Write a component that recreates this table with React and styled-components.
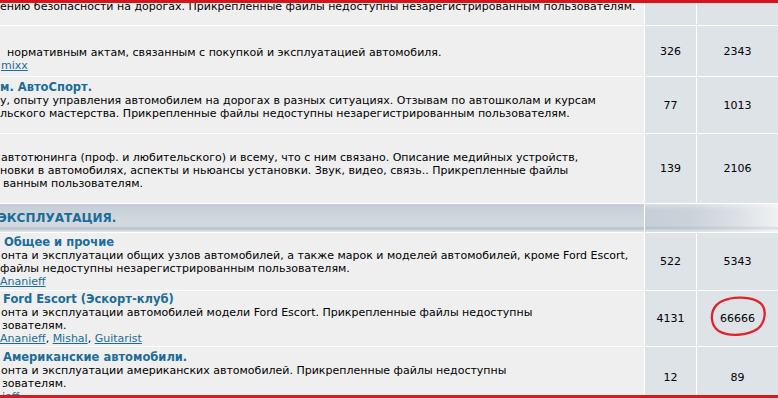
import React from 'react';
import styled, { createGlobalStyle } from 'styled-components';

const GlobalStyle = createGlobalStyle`
  html, body {
    margin: 0;
    padding: 0;
    background: #fff;
    overflow: hidden;
  }
  body {
    font-family: "DejaVu Sans", Verdana, sans-serif;
  }
`;

const forums = [
  {
    top: 0,
    lines: [
      { x: 0, text: 'ению безопасности на дорогах. Прикрепленные файлы недоступны незарегистрированным пользователям.' },
    ],
  },
  {
    top: 7,
    title: { x: 0, text: '' },
    lines: [{ x: 7, text: 'нормативным актам, связанным с покупкой и эксплуатацией автомобиля.' }],
    mods: { x: 1, names: ['mixx'] },
    topics: 326,
    posts: 2343,
  },
  {
    top: 4,
    title: { x: 0, text: 'м. АвтоСпорт.' },
    lines: [
      { x: 0, text: 'у, опыту управления автомобилем на дорогах в разных ситуациях. Отзывам по автошколам и курсам' },
      { x: 0, text: 'льского мастерства. Прикрепленные файлы недоступны незарегистрированным пользователям.' },
    ],
    topics: 77,
    posts: 1013,
  },
  {
    top: 4,
    title: { x: 0, text: '' },
    lines: [
      { x: 1, text: 'автотюнинга (проф. и любительского) и всему, что с ним связано. Описание медийных устройств,' },
      { x: 0, text: 'новки в автомобилях, аспекты и ньюансы установки. Звук, видео, связь.. Прикрепленные файлы' },
      { x: 3, text: 'ванным пользователям.' },
    ],
    topics: 139,
    posts: 2106,
  },
  'cat',
  {
    top: 3,
    title: { x: 4, text: 'Общее и прочие' },
    lines: [
      { x: 1, text: 'онта и эксплуатации общих узлов автомобилей, а также марок и моделей автомобилей, кроме Ford Escort,' },
      { x: 0, text: 'файлы недоступны незарегистрированным пользователям.' },
    ],
    mods: { x: 0, names: ['Ananieff'] },
    topics: 522,
    posts: 5343,
  },
  {
    top: 2,
    title: { x: 3, text: 'Ford Escort (Эскорт-клуб)' },
    lines: [
      { x: 1, text: 'онта и эксплуатации автомобилей модели Ford Escort. Прикрепленные файлы недоступны' },
      { x: 2, text: 'зователям.' },
    ],
    mods: { x: 0, names: ['Ananieff', 'Mishal', 'Guitarist'] },
    topics: 4131,
    posts: 66666,
  },
  {
    top: 4,
    title: { x: 3, text: 'Американские автомобили.' },
    lines: [
      { x: 1, text: 'онта и эксплуатации американских автомобилей. Прикрепленные файлы недоступны' },
      { x: 2, text: 'зователям.' },
    ],
    mods: { x: 2, names: ['ieff'] },
    topics: 12,
    posts: 89,
  },
];

function App() {
  return (
    <>
      <GlobalStyle />
      <Frame>
        <Table>
          {forums.map((f, i) =>
            f === 'cat' ? (
              <React.Fragment key={i}>
                <CatLeft>
                  <CatTitle>ЭКСПЛУАТАЦИЯ.</CatTitle>
                </CatLeft>
                <CatRight />
              </React.Fragment>
            ) : (
              <React.Fragment key={i}>
                <ForumCell $top={f.top}>
                  {f.title && (
                    <Line $x={f.title.x}>
                      <ForumLink href="#">{f.title.text}</ForumLink>
                    </Line>
                  )}
                  {f.lines.map((l, j) => (
                    <Line key={j} $x={l.x}>
                      {l.text}
                    </Line>
                  ))}
                  {f.mods && (
                    <Mods $x={f.mods.x}>
                      {f.mods.names.map((n, k) => (
                        <React.Fragment key={n}>
                          {k > 0 && ', '}
                          <a href="#">{n}</a>
                        </React.Fragment>
                      ))}
                    </Mods>
                  )}
                </ForumCell>
                <NumCell>{f.topics}</NumCell>
                <NumCell>{f.posts}</NumCell>
              </React.Fragment>
            )
          )}
        </Table>
        <Highlight viewBox="0 0 60 44">
          <path d="M14 6 C24 1 44 1 53 8 C60 14 59 28 50 35 C40 42 20 43 10 37 C1 31 1 17 8 10 C11 7 15 5 20 4" />
        </Highlight>
        <TopBar />
        <BottomBar />
      </Frame>
    </>
  );
}

const Frame = styled.div`
  position: relative;
  width: 778px;
  height: 398px;
  overflow: hidden;
  background: #fff;
`;

const Table = styled.div`
  display: grid;
  grid-template-columns: 644px 51px 81px;
  grid-template-rows: 25px 50px 56px 69px 28px 57px 55px 60px;
  gap: 1px;
  background: #fff;
`;

const ForumCell = styled.div`
  box-sizing: border-box;
  background: #efefef;
  padding-top: ${props => props.$top}px;
  overflow: hidden;
  font-size: 11px;
  line-height: 13px;
  color: #000;
`;

const Line = styled.div`
  height: 13px;
  white-space: nowrap;
  margin-left: ${props => props.$x || 0}px;
`;

const ForumLink = styled.a`
  font-family: "DejaVu Sans", Verdana, sans-serif;
  font-size: 11.5px;
  font-weight: 700;
  color: #1b6c98;
  text-decoration: none;
`;

const Mods = styled(Line)`
  font-size: 11px;
  color: #000;

  a {
    color: #1b6c98;
    text-decoration: underline;
  }
`;

const NumCell = styled.div`
  background: #dee3e7;
  display: flex;
  align-items: center;
  justify-content: center;
  font-size: 11px;
  color: #000;
`;

const CatLeft = styled.div`
  display: flex;
  align-items: center;
  overflow: hidden;
  background: linear-gradient(
    to bottom,
    #c3ccd5 0px,
    #c8d0d8 5px,
    #d0d7de 14px,
    #d3d9df 22px,
    #bcc5ce 24px,
    #b9c2cb 25px,
    #dfe3e7 27px
  );
`;

const CatTitle = styled.span`
  margin-left: -2px;
  font-size: 12px;
  font-weight: 700;
  color: #1b6c98;
`;

const CatRight = styled.div`
  grid-column: span 2;
  background:
    linear-gradient(
      to bottom,
      rgba(255, 255, 255, 0.3) 0px,
      rgba(255, 255, 255, 0) 6px,
      rgba(255, 255, 255, 0) 22px,
      rgba(60, 80, 100, 0.12) 24px,
      rgba(255, 255, 255, 0.3) 27px
    ),
    linear-gradient(to right, #c6ced7 0%, #cbd2da 35%, #dde1e6 70%, #eff1f3 100%);
`;

const Highlight = styled.svg`
  position: absolute;
  left: 709px;
  top: 295px;
  width: 58px;
  height: 43px;
  overflow: visible;

  path {
    fill: none;
    stroke: #e0232b;
    stroke-width: 2.4;
    stroke-linecap: round;
  }
`;

const TopBar = styled.div`
  position: absolute;
  top: 0;
  left: 0;
  right: 0;
  height: 3px;
  background: #d6151b;
`;

const BottomBar = styled.div`
  position: absolute;
  bottom: 0;
  left: 0;
  right: 0;
  height: 3px;
  background: #cf1e1f;
`;

export default App;
